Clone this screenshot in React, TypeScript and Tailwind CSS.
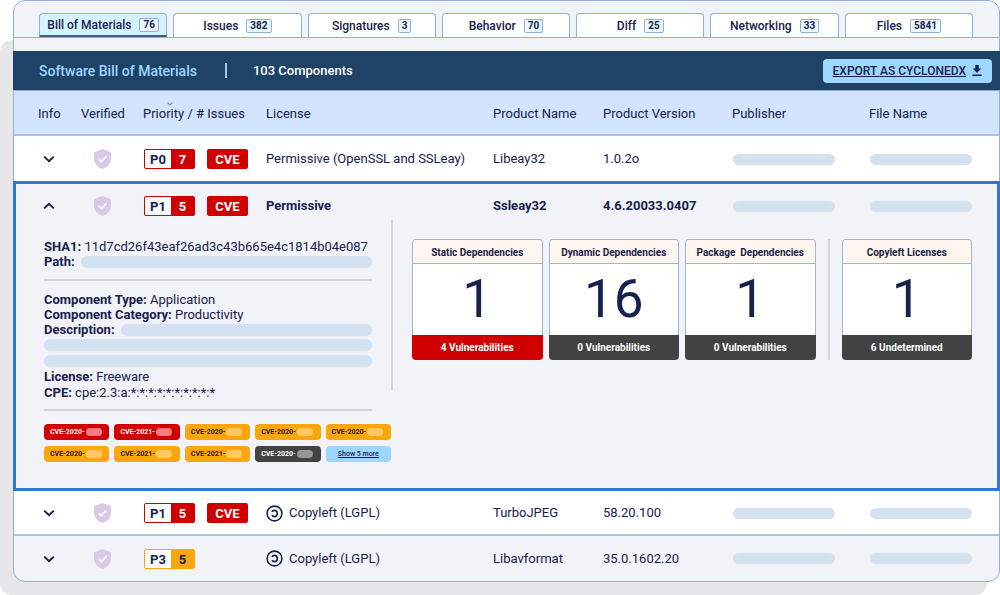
import { useState } from "react";

type Severity = "red" | "amber" | "gray";

const tabs = [
  { name: "Bill of Materials", count: "76" },
  { name: "Issues", count: "382" },
  { name: "Signatures", count: "3" },
  { name: "Behavior", count: "70" },
  { name: "Diff", count: "25" },
  { name: "Networking", count: "33" },
  { name: "Files", count: "5841" },
];

const cves: { label: string; severity: Severity }[] = [
  { label: "CVE-2020-", severity: "red" },
  { label: "CVE-2021-", severity: "red" },
  { label: "CVE-2020-", severity: "amber" },
  { label: "CVE-2020-", severity: "amber" },
  { label: "CVE-2020-", severity: "amber" },
  { label: "CVE-2020-", severity: "amber" },
  { label: "CVE-2021-", severity: "amber" },
  { label: "CVE-2021-", severity: "amber" },
  { label: "CVE-2020-", severity: "gray" },
];

const tagStyle: Record<Severity, string> = {
  red: "bg-[#d00000] text-white",
  amber: "bg-[#faa70f] text-[#17214d]",
  gray: "bg-[#424242] text-white",
};

const tagPill: Record<Severity, string> = {
  red: "bg-[#fd7b80]",
  amber: "bg-[#ffc863]",
  gray: "bg-[#97969c]",
};

function Chevron({ up = false }: { up?: boolean }) {
  return (
    <svg width="12" height="8" viewBox="0 0 12 8" fill="none" stroke="#17214d" strokeWidth="2">
      <path d={up ? "M1.2 6.4 6 1.8l4.8 4.6" : "M1.2 1.6 6 6.2l4.8-4.6"} />
    </svg>
  );
}

function Shield() {
  return (
    <svg width="17" height="20" viewBox="0 0 17 20" role="img" aria-label="Verified">
      <path d="M8.500 0 17 3.200V9.500c0 5-3.500 9-8.500 10.500C3.500 18.500 0 14.500 0 9.500V3.200Z" fill="#dac9e6" />
      <path d="m4.800 10.200 2.500 2.400 4.900-5" fill="none" stroke="#fff" strokeWidth="1.800" />
    </svg>
  );
}

function Copyleft() {
  return (
    <svg width="17" height="17" viewBox="0 0 17 17" fill="none" stroke="#17214d" aria-hidden="true">
      <circle cx="8.500" cy="8.500" r="7.400" strokeWidth="1.600" />
      <path d="M6 6.900C6.400 5.900 7.300 5.400 8.400 5.400c1.800 0 2.900 1.300 2.900 3.100s-1.100 3.100-2.900 3.100c-1.100 0-2-.5-2.400-1.500" strokeWidth="1.600" />
    </svg>
  );
}

function Download() {
  return (
    <svg width="10" height="11" viewBox="0 0 10 11" fill="#17214d" aria-hidden="true">
      <path d="M3.300 0h3.400v3.500h2.500L5 7.900.8 3.500h2.500ZM.3 9.400h9.400V11H.3Z" />
    </svg>
  );
}

function Bar() {
  return <div className="ml-px h-[11px] w-[102px] rounded-full bg-[#d4e1f1]" />;
}

function Priority({ level, count, amber = false }: { level: string; count: string; amber?: boolean }) {
  return (
    <span
      className={`flex h-5 w-[51px] items-stretch overflow-hidden rounded-xs border text-[13px] leading-[19px] font-bold ${
        amber ? "border-[#faa70f] bg-[#faa70f]" : "border-[#d00000] bg-[#d00000]"
      }`}
    >
      <span className="w-[26px] bg-white text-center text-[#17214d]">{level}</span>
      <span className={`flex-1 text-center ${amber ? "text-[#17214d]" : "text-white"}`}>{count}</span>
    </span>
  );
}

interface RowProps {
  level: string;
  count: string;
  license: string;
  name: string;
  version: string;
  cell: string;
  amber?: boolean;
  cve?: boolean;
  copyleft?: boolean;
  open?: boolean;
  onToggle?: () => void;
}

function Row({ level, count, license, name, version, cell, amber, cve = true, copyleft, open, onToggle }: RowProps) {
  return (
    <tr>
      <td className={`${cell} pl-[29px]`}>
        <button type="button" aria-label={`Details of ${name}`} aria-expanded={!!open} onClick={onToggle} className="block">
          <Chevron up={open} />
        </button>
      </td>
      <td className={`${cell} pl-[13px]`}>
        <Shield />
      </td>
      <td className={cell}>
        <div className="flex gap-3 pl-px">
          <Priority level={level} count={count} amber={amber} />
          {cve && (
            <span className="h-5 w-[41px] rounded-xs bg-[#d00000] text-center text-[13px] leading-[21px] font-bold text-white">
              CVE
            </span>
          )}
        </div>
      </td>
      <td className={cell}>
        <span className="flex items-center gap-1.5">
          {copyleft && <Copyleft />}
          {license}
        </span>
      </td>
      <td className={cell}>{name}</td>
      <td className={cell}>{version}</td>
      <td className={cell}>
        <Bar />
      </td>
      <td className={cell}>
        <Bar />
      </td>
    </tr>
  );
}

function Stat({ title, value, footer, red = false }: { title: string; value: string; footer: string; red?: boolean }) {
  return (
    <section className="flex-1 text-center">
      <div className="rounded-t border border-b-0 border-[#9bb7e0] bg-white">
        <h3 className="rounded-t-[3px] border-b border-[#9bb7e0] bg-[#fff7ef] pt-[3px] text-[10px] leading-5 font-bold whitespace-pre">
          {title}
        </h3>
        <p className="h-[71px] text-[53px] leading-[71px]">{value}</p>
      </div>
      <p className={`rounded-b text-[10px] leading-[25px] font-bold text-white ${red ? "bg-[#d00000]" : "bg-[#424242]"}`}>
        {footer}
      </p>
    </section>
  );
}

export default function App() {
  const [active, setActive] = useState(0);
  const [open, setOpen] = useState(true);

  return (
    <div className="relative bg-white pb-[13px] pl-[13px] font-[Roboto,sans-serif] text-[13px] text-[#17214d]">
      <div className="absolute top-10 right-[13px] bottom-0 left-0 rounded-xl bg-[#e7e7e9]" />
      <main className="relative rounded-xl border border-[#92b0dc] bg-[#f2f3f9]">
        <nav className="flex gap-1.5 border-b border-[#92b0dc] pt-3 pr-[26px] pl-[25px]">
          {tabs.map((tab, i) => (
            <button
              key={tab.name}
              type="button"
              onClick={() => setActive(i)}
              className={`flex h-6 flex-1 items-center justify-center gap-2 rounded-t border border-[#92b0dc] text-xs font-medium ${
                i === active ? "border-b-2 border-b-[#4b587c] bg-[#d2f3ff]" : "border-b-0 bg-white"
              }`}
            >
              {tab.name}
              <span className="rounded-xs border border-[#8fb0de] bg-[#eefaff] px-[3px] text-[10px] leading-3 font-bold">
                {tab.count}
              </span>
            </button>
          ))}
        </nav>

        <header className="-mx-px mt-[13px] flex h-10 items-center border-b border-[#8fa9c9] bg-[#1f4267] pr-2 pl-[26px] font-medium">
          <h1 className="text-sm text-[#9fd6ff]">Software Bill of Materials</h1>
          <span className="mr-[26px] ml-7 h-[15px] w-0.5 bg-[#9fc4e6]" />
          <p className="text-white">103 Components</p>
          <button type="button" className="ml-auto flex h-6 items-center gap-1.5 rounded bg-[#9fd8ff] px-2.5 text-xs font-medium">
            <span className="underline">EXPORT AS CYCLONEDX</span>
            <Download />
          </button>
        </header>

        <table className="w-full table-fixed border-separate border-spacing-0 text-left">
          <colgroup>
            <col className="w-[67px]" />
            <col className="w-[62px]" />
            <col className="w-[123px]" />
            <col />
            <col className="w-[110px]" />
            <col className="w-[129px]" />
            <col className="w-[137px]" />
            <col className="w-[130px]" />
          </colgroup>
          <thead>
            <tr>
              <th className="h-[45px] border-b-2 border-[#a9c2e5] bg-[#d2e4ff] pt-0.5 pl-6 font-normal">Info</th>
              <th className="border-b-2 border-[#a9c2e5] bg-[#d2e4ff] pt-0.5 font-normal">Verified</th>
              <th className="border-b-2 border-[#a9c2e5] bg-[#d2e4ff] pt-0.5 font-normal">
                <span className="relative">
                  Priority / # Issues
                  <svg className="absolute -top-1 left-6" width="6" height="4" viewBox="0 0 6 4" fill="none" stroke="#7f8fb0" strokeWidth="1.200">
                    <path d="M.6.600 3 3 5.400.6" />
                  </svg>
                </span>
              </th>
              <th className="border-b-2 border-[#a9c2e5] bg-[#d2e4ff] pt-0.5 font-normal">License</th>
              <th className="border-b-2 border-[#a9c2e5] bg-[#d2e4ff] pt-0.5 font-normal">Product Name</th>
              <th className="border-b-2 border-[#a9c2e5] bg-[#d2e4ff] pt-0.5 font-normal">Product Version</th>
              <th className="border-b-2 border-[#a9c2e5] bg-[#d2e4ff] pt-0.5 font-normal">Publisher</th>
              <th className="border-b-2 border-[#a9c2e5] bg-[#d2e4ff] pt-0.5 font-normal">File Name</th>
            </tr>
          </thead>
          <tbody>
            <Row
              level="P0"
              count="7"
              license="Permissive (OpenSSL and SSLeay)"
              name="Libeay32"
              version="1.0.2o"
              cell="h-[46px] bg-white"
            />
          </tbody>
          <tbody className="outline-3 -outline-offset-2 outline-[#3177d6]">
            <Row
              level="P1"
              count="5"
              license="Permissive"
              name="Ssleay32"
              version="4.6.20033.0407"
              cell="h-[38px] pt-2.5 font-bold"
              open={open}
              onToggle={() => setOpen(!open)}
            />
            {open && (
              <tr>
                <td colSpan={8}>
                  <div className="flex items-start pr-[27px] pb-7 pl-[30px]">
                    <div className="w-[347px] pt-[19px] leading-[15px]">
                      <div className="mr-[19px]">
                        <p className="whitespace-nowrap">
                          <b>SHA1:</b> 11d7cd26f43eaf26ad3c43b665e4c1814b04e087
                        </p>
                        <div className="flex items-center gap-1.5">
                          <b>Path:</b>
                          <div className="h-3 flex-1 rounded-full bg-[#d4e1f1]" />
                        </div>
                        <hr className="mt-2.5 mb-[11px] border-t-2 border-[#cfd0da]" />
                        <p>
                          <b>Component Type:</b> Application
                        </p>
                        <p>
                          <b>Component Category:</b> Productivity
                        </p>
                        <div className="flex items-center gap-1.5">
                          <b>Description:</b>
                          <div className="h-3 flex-1 rounded-full bg-[#d4e1f1]" />
                        </div>
                        <div className="mt-0.5 h-3 rounded-full bg-[#d4e1f1]" />
                        <div className="mt-1 mb-0.5 h-3 rounded-full bg-[#d4e1f1]" />
                        <p className="leading-4">
                          <b>License:</b> Freeware
                        </p>
                        <p className="leading-4">
                          <b>CPE:</b> cpe:2.3:a:*:*:*:*:*:*:*:*:*:*
                        </p>
                        <hr className="mt-2 mb-[13px] border-t-2 border-[#cfd0da]" />
                      </div>
                      <div className="grid grid-cols-5 gap-x-[5px] gap-y-1.5 text-[7px] leading-4 font-bold">
                        {cves.map((cve, i) => (
                          <span key={i} className={`flex h-4 items-center gap-px rounded pl-1.5 ${tagStyle[cve.severity]}`}>
                            {cve.label}
                            <i className={`h-2 w-4 rounded-full ${tagPill[cve.severity]}`} />
                          </span>
                        ))}
                        <a href="#more" className="h-4 rounded bg-[#9fd6ff] text-center font-medium underline">
                          Show 5 more
                        </a>
                      </div>
                    </div>
                    <div className="h-[170px] w-0.5 bg-[#d3d4de]" />
                    <div className="flex flex-1 gap-1.5 pt-[19px] pl-[19px]">
                      <Stat title="Static Dependencies" value="1" footer="4 Vulnerabilities" red />
                      <Stat title="Dynamic Dependencies" value="16" footer="0 Vulnerabilities" />
                      <Stat title="Package  Dependencies" value="1" footer="0 Vulnerabilities" />
                      <div className="mx-1.5 w-0.5 bg-[#d3d4de]" />
                      <Stat title="Copyleft Licenses" value="1" footer="6 Undetermined" />
                    </div>
                  </div>
                </td>
              </tr>
            )}
          </tbody>
          <tbody>
            <Row
              level="P1"
              count="5"
              license="Copyleft (LGPL)"
              name="TurboJPEG"
              version="58.20.100"
              cell="h-[46px] border-b-2 border-[#a9c2e5] bg-white pt-0.5"
              copyleft
            />
            <Row
              level="P3"
              count="5"
              license="Copyleft (LGPL)"
              name="Libavformat"
              version="35.0.1602.20"
              cell="h-[45px]"
              amber
              cve={false}
              copyleft
            />
          </tbody>
        </table>
      </main>
    </div>
  );
}
